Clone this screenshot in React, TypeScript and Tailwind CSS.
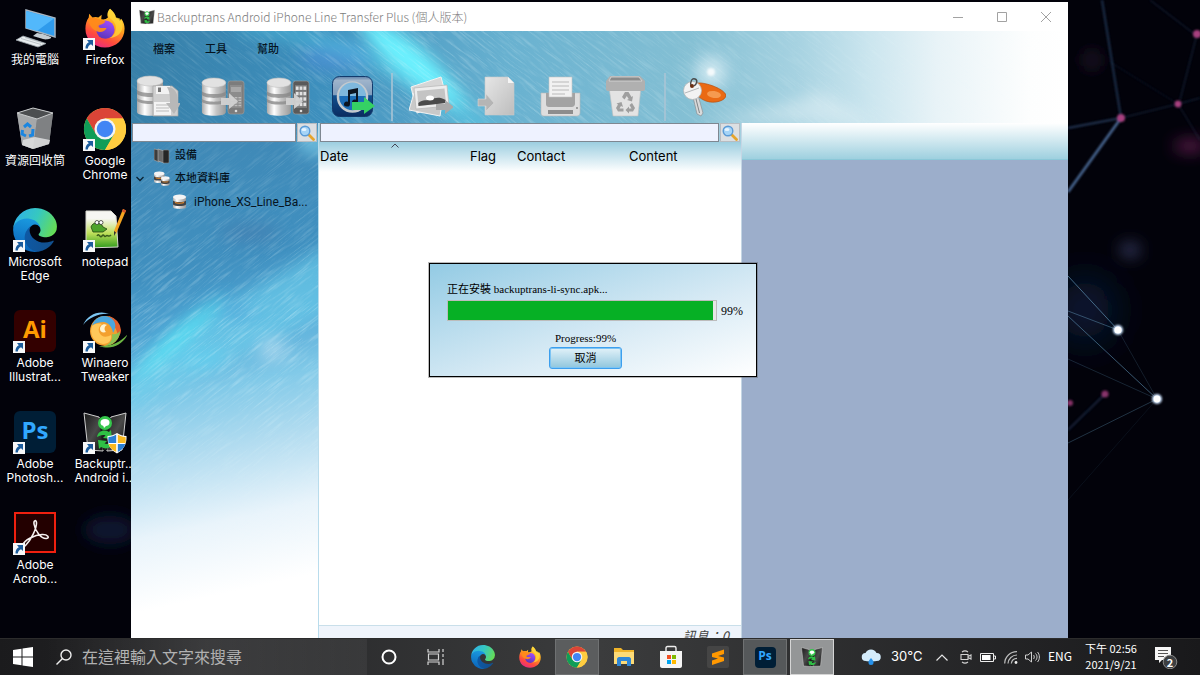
import type { ReactNode } from "react";

const SANS = "font-['Inter','Noto_Sans_CJK_TC',sans-serif]";
const CJK = "font-['Noto_Sans_CJK_TC',sans-serif]";

/* ---------- shared gradients and textures ---------- */

function SharedDefs() {
  return (
    <svg className="absolute h-0 w-0" aria-hidden="true">
      <defs>
        <linearGradient id="edge-dark" x1="0" y1="0" x2="1" y2="0.2">
          <stop offset="0" stopColor="#0d5aa8" />
          <stop offset="1" stopColor="#12508f" />
        </linearGradient>
        <linearGradient id="edge-blue" x1="0.6" y1="0" x2="0.4" y2="1">
          <stop offset="0" stopColor="#1b9de2" />
          <stop offset="1" stopColor="#0b63b8" />
        </linearGradient>
        <linearGradient id="edge-green" x1="0" y1="0.3" x2="1" y2="0.6">
          <stop offset="0" stopColor="#2fb1e8" />
          <stop offset="0.5" stopColor="#36c8c0" />
          <stop offset="1" stopColor="#66dd55" />
        </linearGradient>
        <linearGradient id="fox-body" x1="0.8" y1="0" x2="0.3" y2="1">
          <stop offset="0" stopColor="#ffe84a" />
          <stop offset="0.4" stopColor="#ffa41c" />
          <stop offset="0.75" stopColor="#ff4a3d" />
          <stop offset="1" stopColor="#e62a84" />
        </linearGradient>
        <linearGradient id="fox-globe" x1="0.7" y1="0" x2="0.3" y2="1">
          <stop offset="0" stopColor="#a04cff" />
          <stop offset="1" stopColor="#5a35b8" />
        </linearGradient>
        <linearGradient id="metal" x1="0" y1="0" x2="1" y2="0">
          <stop offset="0" stopColor="#a9a9a9" />
          <stop offset="0.3" stopColor="#ffffff" />
          <stop offset="0.6" stopColor="#c6c6c6" />
          <stop offset="1" stopColor="#9a9a9a" />
        </linearGradient>
        <linearGradient id="paper" x1="0" y1="0" x2="1" y2="1">
          <stop offset="0" stopColor="#e6e6e6" />
          <stop offset="1" stopColor="#bdbdbd" />
        </linearGradient>
        <linearGradient id="folded" x1="0" y1="0" x2="1" y2="1">
          <stop offset="0" stopColor="#191919" />
          <stop offset="0.5" stopColor="#4a4a4a" />
          <stop offset="1" stopColor="#0c0c0c" />
        </linearGradient>
        <filter id="soft8" x="-200%" y="-300%" width="500%" height="700%">
          <feGaussianBlur stdDeviation="8" />
        </filter>
        <filter id="soft20" x="-200%" y="-200%" width="500%" height="500%">
          <feGaussianBlur stdDeviation="20" />
        </filter>
        <filter id="soft1" x="-100%" y="-100%" width="300%" height="300%">
          <feGaussianBlur stdDeviation="1.2" />
        </filter>
        <filter id="streaks" x="0" y="0" width="100%" height="100%">
          <feTurbulence type="fractalNoise" baseFrequency="0.035 0.6" numOctaves="3" seed="4" />
          <feColorMatrix values="0 0 0 0 0.85  0 0 0 0 0.98  0 0 0 0 1  2.6 0 0 0 -1.2" />
        </filter>
      </defs>
    </svg>
  );
}

function Wallpaper() {
  return (
    <svg
      className="absolute inset-0 h-full w-full"
      viewBox="0 0 1200 675"
      preserveAspectRatio="xMaxYMin slice"
      aria-hidden="true"
    >
      <rect width="1200" height="675" fill="#02020a" />
      <ellipse cx="110" cy="530" rx="26" ry="14" fill="#0f1530" filter="url(#soft8)" />
      <ellipse cx="1130" cy="250" rx="10" ry="7" fill="#3a3f68" filter="url(#soft8)" />
      <ellipse cx="1092" cy="60" rx="8" ry="8" fill="#2a1c30" filter="url(#soft8)" />
      <ellipse cx="1190" cy="146" rx="16" ry="5" fill="#7a2460" filter="url(#soft8)" />
      <ellipse cx="1085" cy="310" rx="26" ry="30" fill="#0e2140" filter="url(#soft20)" />
      <g stroke="#2b4468" fill="none" filter="url(#soft1)">
        <path d="M1102 0 1121 118" strokeWidth="2" opacity=".7" />
        <path d="M1068 128 1121 118" strokeWidth="2" opacity=".8" />
        <path d="M1121 118 1068 192" strokeWidth="2.5" stroke="#4c6c98" />
        <path d="M1121 118 1178 104 1200 98" opacity=".6" />
        <path d="M1110 62 1178 104" opacity=".3" />
        <path d="M1197 34 1180 100" opacity=".6" />
        <path d="M1150 0 1197 36" opacity=".6" />
        <path d="M1178 104 1200 140" opacity=".5" />
        <path d="M1105 394 1068 430" strokeWidth="2" opacity=".5" />
      </g>
      <g stroke="#5d8fb0" fill="none">
        <path d="M1068 276 1118 330" opacity=".7" />
        <path d="M1068 311 1118 330" opacity=".5" />
        <path d="M1068 316 1157 399" opacity=".6" />
        <path d="M1068 359 1157 399" opacity=".25" />
        <path d="M1118 330 1157 399" opacity=".2" />
        <path d="M1157 399 1068 443" opacity=".35" />
        <path d="M1157 399 1068 500" opacity=".1" />
      </g>
      <g fill="#a8407f" filter="url(#soft1)">
        <circle cx="1121" cy="118" r="4" />
        <circle cx="1178" cy="104" r="3.4" />
        <circle cx="1197" cy="34" r="4" />
        <circle cx="1105" cy="394" r="3.6" opacity=".8" />
        <circle cx="1070" cy="403" r="3" opacity=".8" />
      </g>
      <g filter="url(#soft1)">
        <circle cx="1118" cy="330" r="5" fill="#cfe4ff" />
        <circle cx="1157" cy="399" r="5" fill="#cfe4ff" />
      </g>
      <circle cx="1118" cy="330" r="3.6" fill="#fff" />
      <circle cx="1157" cy="399" r="3.4" fill="#fff" />
    </svg>
  );
}

function HeaderArt() {
  return (
    <svg
      className="absolute inset-0 h-full w-full"
      viewBox="0 0 937 92"
      preserveAspectRatio="none"
      aria-hidden="true"
    >
      <defs>
        <linearGradient id="header-base" x1="0" y1="0" x2="1" y2="0">
          <stop offset="0" stopColor="#377fa8" />
          <stop offset="0.2" stopColor="#3d8fbd" />
          <stop offset="0.4" stopColor="#68b1d0" />
          <stop offset="0.6" stopColor="#85c0d4" />
          <stop offset="0.71" stopColor="#a6d2e1" />
          <stop offset="0.79" stopColor="#cce6ef" />
          <stop offset="0.86" stopColor="#e8f3f7" />
          <stop offset="0.96" stopColor="#fdfefe" />
          <stop offset="1" stopColor="#ffffff" />
        </linearGradient>
        <linearGradient id="header-mask-fill" x1="0" y1="0" x2="1" y2="0">
          <stop offset="0" stopColor="#444" />
          <stop offset="0.3" stopColor="#ccc" />
          <stop offset="0.8" stopColor="#555" />
          <stop offset="1" stopColor="#000" />
        </linearGradient>
        <mask id="header-mask">
          <rect width="937" height="92" fill="url(#header-mask-fill)" />
        </mask>
      </defs>
      <rect width="937" height="92" fill="url(#header-base)" />
      <ellipse cx="205" cy="26" rx="36" ry="14" fill="#4f90d6" opacity=".7" filter="url(#soft8)" />
      <path d="M120 -10C220 0 330 50 380 110L330 100C290 60 230 15 100 0Z" fill="#55cdea" opacity=".5" filter="url(#soft8)" />
      <path d="M225 -14C280 -4 312 36 338 78C290 66 245 30 225 -14Z" fill="#6cf2ff" filter="url(#soft8)" />
      <path d="M740 92H560C610 84 650 76 690 60Z" fill="#fff" opacity=".35" filter="url(#soft8)" />
      <circle cx="580" cy="41" r="16" fill="#e9f6fb" opacity=".7" filter="url(#soft8)" />
      <circle cx="580" cy="41" r="4" fill="#fff" opacity=".8" filter="url(#soft1)" />
      <g mask="url(#header-mask)">
        <g transform="rotate(38 300 40)">
          <rect x="-200" y="-420" width="1000" height="900" filter="url(#streaks)" opacity=".35" />
        </g>
      </g>
    </svg>
  );
}

function SidebarArt() {
  return (
    <svg
      className="absolute inset-0 h-full w-full"
      viewBox="0 0 188 515"
      preserveAspectRatio="none"
      aria-hidden="true"
    >
      <defs>
        <linearGradient id="side-base" x1="0.1" y1="0" x2="0.18" y2="1">
          <stop offset="0" stopColor="#3f87b4" />
          <stop offset="0.3" stopColor="#4090c0" />
          <stop offset="0.42" stopColor="#50a5d4" />
          <stop offset="0.54" stopColor="#80c9e8" />
          <stop offset="0.66" stopColor="#b2dcf0" />
          <stop offset="0.8" stopColor="#e9f4fb" />
          <stop offset="0.94" stopColor="#ffffff" />
        </linearGradient>
        <linearGradient id="side-mask-fill" x1="0" y1="0" x2="0" y2="1">
          <stop offset="0" stopColor="#444" />
          <stop offset="0.4" stopColor="#ddd" />
          <stop offset="0.7" stopColor="#555" />
          <stop offset="0.85" stopColor="#000" />
        </linearGradient>
        <mask id="side-mask">
          <rect width="188" height="515" fill="url(#side-mask-fill)" />
        </mask>
      </defs>
      <rect width="188" height="515" fill="url(#side-base)" />
      <ellipse cx="185" cy="20" rx="18" ry="12" fill="#79c9e6" opacity=".8" filter="url(#soft8)" />
      <ellipse cx="120" cy="110" rx="30" ry="8" fill="#4676a8" opacity=".5" filter="url(#soft8)" />
      <path d="M200 120C150 155 60 190 -10 270L-10 290C60 260 130 220 200 190Z" fill="#6fd2ee" opacity=".6" filter="url(#soft8)" />
      <path d="M100 172C60 186 20 226 -6 262C40 240 70 205 100 172Z" fill="#5ceaf9" opacity=".85" filter="url(#soft8)" />
      <ellipse cx="106" cy="188" rx="12" ry="6" fill="#4b9fd8" opacity=".7" filter="url(#soft8)" />
      <ellipse cx="70" cy="235" rx="24" ry="8" fill="#5cd2f2" opacity=".6" filter="url(#soft8)" />
      <ellipse cx="142" cy="226" rx="14" ry="12" fill="#c6e4f4" opacity=".6" filter="url(#soft8)" />
      <g mask="url(#side-mask)">
        <g transform="rotate(-38 94 200)">
          <rect x="-300" y="-200" width="800" height="800" filter="url(#streaks)" opacity=".35" />
        </g>
      </g>
    </svg>
  );
}

/* ---------- brand icons ---------- */

function EdgeIcon({ className }: { className: string }) {
  return (
    <svg className={className} viewBox="4 5 257 256" aria-hidden="true">
      <path fill="url(#edge-dark)" d="M235.68 195.46a93.73 93.73 0 0 1-10.54 4.71 101.87 101.87 0 0 1-35.9 6.46c-47.32 0-88.54-32.55-88.54-74.32A31.48 31.48 0 0 1 117.13 105c-42.8 1.8-53.8 46.4-53.8 72.53 0 73.88 68.09 81.37 82.76 81.37 7.91 0 19.84-2.3 27-4.56l1.31-.44a128.34 128.34 0 0 0 66.6-52.8 4 4 0 0 0-5.32-5.64Z" />
      <path fill="url(#edge-blue)" d="M110.34 246.34A79.2 79.2 0 0 1 87.6 225a80.72 80.72 0 0 1 29.53-120c3.12-1.47 8.45-4.13 15.54-4a32.35 32.35 0 0 1 25.69 13 31.88 31.88 0 0 1 6.36 18.66c0-.21 24.46-79.6-80-79.6-43.9 0-80 41.66-80 78.21a130.15 130.15 0 0 0 12.11 56 128 128 0 0 0 156.38 67.11 75.55 75.55 0 0 1-62.78-8Z" />
      <path fill="url(#edge-green)" d="M156.94 153.78c-.81 1.05-3.3 2.5-3.3 5.66 0 2.61 1.7 5.12 4.72 7.23 14.38 10 41.49 8.68 41.56 8.68a59.56 59.56 0 0 0 30.27-8.35 61.38 61.38 0 0 0 30.43-52.88c.26-22.41-8-37.31-11.34-43.91C228.11 28.9 182.33 5 132.62 5A128 128 0 0 0 4.63 131.21c.48-36.54 36.8-66.05 80-66.05 3.5 0 23.46.34 42 10.07 16.34 8.58 24.9 18.94 30.85 29.21 6.18 10.67 7.28 24.15 7.28 29.52s-2.74 13.33-7.82 19.82Z" />
    </svg>
  );
}

function ChromeIcon({ className }: { className: string }) {
  return (
    <svg className={className} viewBox="0 0 48 48" aria-hidden="true">
      <circle cx="24" cy="24" r="23" fill="#ffcd40" />
      <path fill="#db4437" d="M4.1 12.5A23 23 0 0 1 43.9 12.5H24L14 29.8Z" />
      <path fill="#0f9d58" d="M4.1 12.5A23 23 0 0 0 24 47L34 29.8 14.1 29.8Z" />
      <path fill="#ffcd40" d="M43.9 12.5A23 23 0 0 1 24 47L34 29.8 24 12.5Z" />
      <circle cx="24" cy="24" r="11.5" fill="#f4f4f4" />
      <circle cx="24" cy="24" r="9" fill="#4285f4" />
    </svg>
  );
}

function FirefoxIcon({ className }: { className: string }) {
  return (
    <svg className={className} viewBox="0 0 48 48" aria-hidden="true">
      <path
        fill="url(#fox-body)"
        d="M30 1c4 3.500 6.500 7 7 10.500 2.500 1 4 2.500 5 4.500l1.500-3C46.500 17 47.500 21 47.500 25 47.500 38 37 47.500 24 47.500S.5 38 .5 25C.5 19.500 2 15 4.500 11.500l.5-4.500 4 4.500c2.500-.8 5-.8 7 0L20 8l-.5 5.500c3 .5 6 0 8-2C26 8 27 4 30 1Z"
      />
      <circle cx="24.500" cy="26" r="11" fill="url(#fox-globe)" />
      <path fill="#ff8a1a" d="M4 13c4-2 9-2 13 .5l7.500 2.500c-1 3-4.500 3.500-7 4.500-2 .8-1.500 3 1 3.500 3 .5 5-.5 7.500 0-2 4-6.500 5.500-10 4.500C9 27 5 21 4 13Z" opacity=".95" />
      <path fill="#ffd83a" d="M30 1c-4 5-2.500 9.500 2.500 13.500 4.500 4 5.500 9 3.500 14.500-1 3-4 6-7 7 9 0 15.500-6 16-13.500.2-4-1-7-3-9.500-1-.8-3-1-5-1.500C36.500 7.500 34 4 30 1Z" opacity=".75" />
    </svg>
  );
}

function FoldedPhonesIcon({ className, shield = false }: { className: string; shield?: boolean }) {
  return (
    <svg className={className} viewBox="0 0 44 44" aria-hidden="true">
      <path d="M1 3 16 7 22 22 20 41 5 40Z" fill="url(#folded)" stroke="#cfcfcf" strokeWidth="1" />
      <path d="M43 3 28 7 22 22 24 41 39 40Z" fill="url(#folded)" stroke="#cfcfcf" strokeWidth="1" />
      <path d="M16 8H28L24 40H20Z" fill="#1c1c1c" />
      <circle cx="22" cy="13" r="7" fill="#35c64b" />
      <ellipse cx="22" cy="12.500" rx="4.500" ry="3.500" fill="#fff" />
      <path d="M20 15 21 18 24 15Z" fill="#fff" />
      <path d="M14 27c1-6 7-8 12-5l2-2 1 9-9-1 2.500-2.500c-3-1-5 0-8.500 1.500ZM30 32c-1 6-7 8-12 5l-2 2-1-9 9 1-2.500 2.500c3 1 5 0 8.500-1.500Z" fill="#2fbf45" />
      {shield && (
        <g>
          <path d="M34 23c3 2 6 3 9.500 3 .5 8-3 14-9.500 17.500C27.500 40 24 34 24.500 26c3.500 0 6.500-1 9.500-3Z" fill="#fff" />
          <path d="M33.200 24.500V33H25.500a19 19 0 0 1 0-6c3 0 5.500-1 7.700-2.500Z" fill="#2a7fd4" />
          <path d="M34.800 24.500V33h7.700a19 19 0 0 0 0-6c-3 0-5.500-1-7.700-2.500Z" fill="#f9b81e" />
          <path d="M33.200 42V34H25.700c1 3.600 3.600 6.400 7.500 8Z" fill="#f9b81e" />
          <path d="M34.800 42V34h7.500c-1 3.600-3.600 6.400-7.500 8Z" fill="#2a7fd4" />
        </g>
      )}
    </svg>
  );
}

/* ---------- desktop shortcuts ---------- */

function ComputerIcon() {
  return (
    <svg className="h-11 w-11" viewBox="0 0 44 44" aria-hidden="true">
      <path d="M13 4 42 12v19L13 22Z" fill="#2f9bec" stroke="#a6b4c0" strokeWidth="1.500" />
      <path d="M13 5 41 12.500 24 25 13 22Z" fill="#52b8fb" />
      <path d="M24 27 30 28 38 31c1 2-5 3-8 2l-10-3Z" fill="#c4ccd2" />
      <path d="M10 30 33 37.500 25 41 3 34Z" fill="#e8ecee" stroke="#9aa3aa" strokeWidth=".8" />
      <path d="M8 32.500 28 38.500M12 31.500 30 37" stroke="#a9b1b7" strokeWidth=".7" />
    </svg>
  );
}

function RecycleBinIcon() {
  return (
    <svg className="h-11 w-11" viewBox="0 0 44 44" aria-hidden="true">
      <path d="M4 6 20 1 40 6 36 37 20 42 9 38Z" fill="#8b8d8f" />
      <path d="M4 6 24 12 20 42 9 38Z" fill="#a6a8aa" />
      <path d="M24 12 40 6 36 37 20 42Z" fill="#7f8183" />
      <path d="M4 6 20 1 40 6 24 12Z" fill="#4c4e50" stroke="#c9cbcc" strokeWidth="1" />
      <path d="M10 33 22 30 37 33 36 37 20 42 9 38Z" fill="#dfe1e2" opacity=".85" />
      <g fill="none" stroke="#1b86e0" strokeWidth="3">
        <path d="M11 20 14.500 17 18 20" />
        <path d="M20 22 19.500 28 16 29" />
        <path d="M13 29 9 27 9.500 23" />
      </g>
    </svg>
  );
}

function NotepadIcon() {
  return (
    <svg className="h-11 w-11" viewBox="0 0 44 44" aria-hidden="true">
      <defs>
        <linearGradient id="note-bg" x1="0" y1="0" x2="0" y2="1">
          <stop offset="0.2" stopColor="#f6f6f2" />
          <stop offset="0.6" stopColor="#bfe05a" />
          <stop offset="1" stopColor="#2f9a1d" />
        </linearGradient>
      </defs>
      <path d="M3 3H28L33 8 35 39 3 40Z" fill="url(#note-bg)" stroke="#d8d8d0" />
      <path d="M8 19C9 14 18 13 20 19L24 21 20 24H10Z" fill="#4da32a" stroke="#23480f" strokeWidth=".8" />
      <circle cx="14" cy="14.500" r="2" fill="#fff" stroke="#222" strokeWidth=".7" />
      <circle cx="18" cy="14.500" r="2" fill="#fff" stroke="#222" strokeWidth=".7" />
      <path d="M14 28c2-4 3 3 5 0s2 2 4 0 2 2 5-1" stroke="#3a5b1c" strokeWidth="1.500" fill="none" />
      <path d="M33 26 31 23 40 1 43 2.500Z" fill="#f4a420" />
      <path d="M40 1 43 2.500 42 5 39 3.500Z" fill="#d8542c" />
      <path d="M31 23 33 24.500 31 28Z" fill="#333" />
    </svg>
  );
}

function WinaeroIcon() {
  return (
    <svg className="h-11 w-11" viewBox="0 0 44 44" aria-hidden="true">
      <circle cx="22" cy="22" r="15" fill="#f3a02f" />
      <path d="M26 7a16 16 0 0 1 12 14c0 3-1 5-3 7-1-9-5-14-12-17Z" fill="#e2602c" />
      <path d="M37 22c0 8-7 15-16 15 6-2 9-6 8-12 4 1 6-1 8-3Z" fill="#8cc152" />
      <path d="M9 17c2-7 9-12 17-9 7 3 8 10 4 16-1-6-4-10-9-11-5 0-9 1-12 4Z" fill="#4aa6df" />
      <path d="M9 17c-3 8 2 17 11 18 6 0 9-4 8-9-5 3-10 2-12-3-1-3 0-6 3-8-4-1-8 0-10 2Z" fill="#ffc85a" />
      <path d="M17 20c0-3 3-6 7-4-3 1-3 5-1 7-3 1-6 0-6-3Z" fill="#fff3cf" />
      <path d="M0 16C5 5 16 1 27 5 16 4 7 8 0 16Z" fill="#7cc6f2" />
      <path d="M45 25C39 37 28 41 16 37c11 1 21-3 29-12Z" fill="#6cb543" />
    </svg>
  );
}

function AcrobatIcon() {
  return (
    <svg className="h-11 w-11" viewBox="0 0 44 44" aria-hidden="true">
      <rect x="2" y="2" width="40" height="39" fill="#230000" stroke="#f0200f" strokeWidth="2" />
      <path
        d="M10 34c1-5 12-10 19-10.500 6-.3 8 3.500 4.500 4C28 28 22 20 21 13c-.5-4 2.500-4.500 2.500-1C23.500 18 18 29 12.500 34.500 11 36 9.500 36 10 34Z"
        fill="none"
        stroke="#f5f0f0"
        strokeWidth="1.600"
      />
    </svg>
  );
}

function AdobeTile({ text, className }: { text: string; className: string }) {
  return (
    <span
      className={`flex h-[42px] w-[42px] items-center justify-center rounded-md pb-1 font-['Open_Sans',sans-serif] text-[24px] leading-none font-bold ${className}`}
      aria-hidden="true"
    >
      {text}
    </span>
  );
}

function ShortcutArrow() {
  return (
    <svg className="absolute bottom-0 left-0 h-3 w-3" viewBox="0 0 12 12" aria-hidden="true">
      <rect width="12" height="12" fill="#f7f8f9" />
      <path d="M4 2H10V8L8 6.200C6 7 5 8.500 4.800 10.500H2.500C2.300 7.500 3.500 5.500 5.800 4.200Z" fill="#1c5c9c" />
    </svg>
  );
}

type Shortcut = { lines: string[]; icon: ReactNode; linked: boolean };

const shortcuts: Shortcut[] = [
  { lines: ["我的電腦"], icon: <ComputerIcon />, linked: false },
  { lines: ["Firefox"], icon: <FirefoxIcon className="h-10 w-10" />, linked: true },
  { lines: ["資源回收筒"], icon: <RecycleBinIcon />, linked: false },
  { lines: ["Google", "Chrome"], icon: <ChromeIcon className="h-11 w-11" />, linked: true },
  { lines: ["Microsoft", "Edge"], icon: <EdgeIcon className="h-11 w-11" />, linked: true },
  { lines: ["notepad"], icon: <NotepadIcon />, linked: true },
  { lines: ["Adobe", "Illustrat..."], icon: <AdobeTile text="Ai" className="bg-[#330000] text-[#ff9a00]" />, linked: true },
  { lines: ["Winaero", "Tweaker"], icon: <WinaeroIcon />, linked: true },
  { lines: ["Adobe", "Photosh..."], icon: <AdobeTile text="Ps" className="bg-[#001e36] text-[#31a8ff]" />, linked: true },
  { lines: ["Backuptr...", "Android i..."], icon: <FoldedPhonesIcon className="h-11 w-11" shield />, linked: true },
  { lines: ["Adobe", "Acrob..."], icon: <AcrobatIcon />, linked: true },
];

function DesktopShortcuts() {
  return (
    <nav className="relative w-[131px] shrink-0 overflow-hidden pt-[6px]" aria-label="Desktop">
      <ul className="grid auto-rows-[101px] grid-cols-[70px_70px]">
        {shortcuts.map((s) => (
          <li key={s.lines.join(" ")}>
            <button type="button" className="flex w-full flex-col items-center text-center text-xs leading-[14px] text-white">
              <span className="relative mb-[3px] flex h-11 w-11 items-center justify-center">
                {s.icon}
                {s.linked && <ShortcutArrow />}
              </span>
              {s.lines.map((l) => (
                <span key={l} className="whitespace-nowrap">
                  {l}
                </span>
              ))}
            </button>
          </li>
        ))}
      </ul>
    </nav>
  );
}

/* ---------- toolbar icons ---------- */

function DatabaseShape() {
  return (
    <g>
      <path d="M1 6v31c0 5 26 5 26 0V6Z" fill="url(#metal)" />
      <ellipse cx="14" cy="6" rx="13" ry="5" fill="#e2e2e2" stroke="#bdbdbd" strokeWidth=".6" />
      <path d="M1 15c4 4 22 4 26 0v4c-4 4-22 4-26 0Z" fill="#858585" opacity=".75" />
      <path d="M1 23c4 4 22 4 26 0v3c-4 4-22 4-26 0Z" fill="#8f8f8f" opacity=".85" />
    </g>
  );
}

function BackupIcon() {
  return (
    <svg className="h-11 w-11" viewBox="0 0 44 44" aria-hidden="true">
      <DatabaseShape />
      <path d="M17 11H36L42 16V41H17Z" fill="#cfcfcf" stroke="#a8a8a8" strokeWidth=".7" />
      <rect x="20" y="11" width="14" height="8" fill="#f2f2f2" />
      <rect x="22" y="12.500" width="3" height="4.500" fill="#777" />
      <rect x="18" y="27" width="17" height="13" fill="#f4f4f4" />
      <path d="M20 30H33M20 33H33M20 36H33" stroke="#bbb" />
      <path d="M31 12C39 12 42 18 42 28H45L38 39 30 28H34C34 22 34 17 31 12Z" fill="#b8b8b8" />
    </svg>
  );
}

const phoneKeys = [0, 1, 2, 3].flatMap((r) => [0, 1, 2].map((c) => [c, r]));

function TransferIcon({ apple = false }: { apple?: boolean }) {
  return (
    <svg className="h-11 w-11" viewBox="0 0 44 44" aria-hidden="true">
      <g transform="translate(0 2) scale(.92 .95)">
        <DatabaseShape />
      </g>
      <rect x="27" y="6" width="16" height="33" rx="2.500" fill={apple ? "#5a5a5a" : "#7c7c7c"} stroke="#9b9b9b" strokeWidth=".7" />
      <rect x="29" y="10" width="12" height="23" fill={apple ? "#7a7a7a" : "#8c8c8c"} />
      {phoneKeys.map(([c, r]) => (
        <rect
          key={`${c}-${r}`}
          x={29.8 + c * 3.8}
          y={(apple ? 11.5 : 22) + r * (apple ? 5.4 : 2.6)}
          width="2.800"
          height={apple ? 3.4 : 1.4}
          fill={apple ? "#e2e2e2" : "#bdbdbd"}
        />
      ))}
      {!apple && <rect x="30" y="12" width="10" height="5" fill="#a8a8a8" />}
      <circle cx="35" cy="36" r="1.300" fill="#ddd" />
      <path d="M20 23H28V18L37 26.500 28 34V30H20Z" fill="#d2d2d2" opacity=".95" />
    </svg>
  );
}

function ITunesIcon() {
  return (
    <svg className="h-11 w-11" viewBox="0 0 44 44" aria-hidden="true">
      <defs>
        <linearGradient id="itunes" x1="0" y1="0" x2="0" y2="1">
          <stop offset="0" stopColor="#5d7fa8" />
          <stop offset="0.1" stopColor="#9fb4cb" />
          <stop offset="0.46" stopColor="#7f9dbd" />
          <stop offset="0.48" stopColor="#11508f" />
          <stop offset="1" stopColor="#0b2c60" />
        </linearGradient>
      </defs>
      <rect x="1.500" y="1.500" width="40" height="40" rx="7" fill="url(#itunes)" stroke="#123a6c" />
      <circle cx="21.500" cy="22" r="14.500" fill="#1b6cb6" stroke="#c3c9ce" strokeWidth="2.500" />
      <path d="M8 21a13.500 13.500 0 0 1 27 0Z" fill="#7fb8dd" />
      <path d="M17 15 27 13V27a3 2.500 0 1 1-2-2.300V18L19 19.200V29a3 2.500 0 1 1-2-2.300Z" fill="#0c1420" />
      <path d="M21 27H33V22L44 31 33 39V35H21Z" fill="#35d164" />
    </svg>
  );
}

function PhotosIcon() {
  return (
    <svg className="h-11 w-11" viewBox="0 0 44 44" aria-hidden="true">
      <path d="M2 12 32 2 39 28 8 38Z" fill="#d6d6d6" stroke="#f2f2f2" />
      <path d="M5 18 34 22 31 41 0 35Z" fill="#c9c9c9" stroke="#f2f2f2" />
      <path d="M5 13 38 10 40 31 7 34Z" fill="#ededed" stroke="#b5b5b5" strokeWidth=".7" />
      <path d="M8 16 35.500 13.500 37 28 9.500 31Z" fill="#c4c4c4" />
      <path d="M9.300 28C14 24 18 26 22 24.500S30 21.500 36.700 25L37 28 9.500 31Z" fill="#4a4a4a" />
      <ellipse cx="21" cy="23" rx="4" ry="2.500" fill="#fff" />
      <path d="M27 29H36V25L45 32 36 39V35H27Z" fill="#a9a9a9" />
    </svg>
  );
}

function ExportPageIcon() {
  return (
    <svg className="h-11 w-11" viewBox="0 0 44 44" aria-hidden="true">
      <path d="M11 2H34L40 8V40H11Z" fill="url(#paper)" stroke="#c9c9c9" strokeWidth=".6" />
      <path d="M34 2V8H40Z" fill="#f6f6f6" />
      <path d="M4 24H12V19L20 28 12 36V31H4Z" fill="#b5b5b5" stroke="#d8d8d8" strokeWidth=".6" />
    </svg>
  );
}

function PrinterIcon() {
  return (
    <svg className="h-11 w-11" viewBox="0 0 44 44" aria-hidden="true">
      <path d="M2 18H41V38c0 2-2 3-3 3H5c-2 0-3-1-3-3Z" fill="#dedede" stroke="#b9b9b9" strokeWidth=".6" />
      <path d="M7 18H36V29c0 2-2 3-3 3H10c-2 0-3-1-3-3Z" fill="#a3a3a3" />
      <path d="M10 2H33V22H10Z" fill="#f1f1f1" stroke="#c2c2c2" strokeWidth=".6" />
      <path d="M13 7H30M13 11H30M13 15H30M13 19H26" stroke="#b9b9b9" />
      <rect x="9" y="35" width="25" height="4" fill="#8d8d8d" />
      <circle cx="38" cy="33" r="1" fill="#888" />
    </svg>
  );
}

function TrashIcon() {
  return (
    <svg className="h-11 w-11" viewBox="0 0 44 44" aria-hidden="true">
      <path d="M5 12H37L34 41H9Z" fill="#e3e3e3" stroke="#bfbfbf" strokeWidth=".6" />
      <path d="M6 1H36L41 6V14c0 1-1 2-2 2H4c-1 0-2-1-2-2V6Z" fill="#b0b0b0" />
      <path d="M7 2H35L38 6H5Z" fill="#8b8b8b" stroke="#d9d9d9" strokeWidth=".8" />
      <g fill="#9f9f9f">
        <path d="M18 22 21 17H24.500L27.500 22 29 21 28 26.500 23 25 24.700 24 22.800 21 20.500 24.500Z" />
        <path d="M28 28 31 33 29 36.500H25V38.500L21.500 35 25 31.500V33.500H27.500L25.500 30Z" />
        <path d="M19.500 33.500V36.500H14L12 33 14 29.500 12.500 28.500 17.500 27 19 32 17 31 15.500 33.500Z" />
      </g>
    </svg>
  );
}

function KeyIcon() {
  return (
    <svg className="h-11 w-11" viewBox="0 0 44 44" aria-hidden="true">
      <path d="M15 8C24 7 42 14 44 20 44 26 32 29 24 26 19 24 17 22 15 20Z" fill="#ea6a14" stroke="#b94e0c" strokeWidth=".7" />
      <ellipse cx="32" cy="19.500" rx="7" ry="3.500" fill="#f59a50" transform="rotate(8 32 19.500)" />
      <path d="M11 22 15 39 19 41 21 38 16 20Z" fill="#d8dadb" stroke="#8b8f92" strokeWidth=".7" />
      <path d="M13.500 22 17.500 38" stroke="#808487" />
      <circle cx="10.500" cy="15.500" r="9" fill="#f3f3f3" stroke="#b4b7b9" strokeWidth=".8" />
      <path d="M3 18 17 13" stroke="#b5b8ba" />
      <path d="M9 11C8 6 10 3 13 4S15 9 12 11" fill="none" stroke="#4a4a4a" strokeWidth="1.400" />
      <circle cx="10" cy="11" r="2" fill="#6b2f12" />
    </svg>
  );
}

function ToolButton({ label, children }: { label: string; children: ReactNode }) {
  return (
    <button type="button" aria-label={label} className="h-11 w-11">
      {children}
    </button>
  );
}

function ToolDivider() {
  return <span className="mx-4 h-12 w-[2px] bg-[#a9c4d4]/80" />;
}

function LoupeIcon() {
  return (
    <svg className="h-4 w-4" viewBox="0 0 16 16" aria-hidden="true">
      <path d="M9.500 9.500 14.500 14.500" stroke="#e6a52c" strokeWidth="2.800" strokeLinecap="round" />
      <circle cx="6" cy="6" r="4.800" fill="#a5d4f7" stroke="#5b9bd6" strokeWidth="1.400" />
      <ellipse cx="5" cy="4.500" rx="2.500" ry="1.600" fill="#e6f4ff" />
    </svg>
  );
}

function SearchField({ label }: { label: string }) {
  return (
    <form className="flex h-[19px] gap-px px-px" onSubmit={(e) => e.preventDefault()}>
      <input
        type="search"
        aria-label={label}
        className="min-w-0 flex-1 appearance-none border border-[#7e8791] bg-[#eef2ff] px-1 text-xs outline-none"
      />
      <button type="submit" aria-label={label} className="flex w-5 items-center justify-center border border-[#b7bcc1] bg-[#dcdfe2]">
        <LoupeIcon />
      </button>
    </form>
  );
}

/* ---------- sidebar tree icons ---------- */

function DevicesIcon() {
  return (
    <svg className="h-4 w-4" viewBox="0 0 16 16" aria-hidden="true">
      <path d="M0 1 5 2V14L0 12Z" fill="#3c3c3c" stroke="#aaa" strokeWidth=".6" />
      <path d="M4 1 10 3V15L4 13Z" fill="#6a6a6a" stroke="#bbb" strokeWidth=".6" />
      <rect x="9" y="2" width="6" height="13" rx="1" fill="#262626" stroke="#8b8b8b" strokeWidth=".6" />
    </svg>
  );
}

function DiskStack({ x = 0, y = 0, s = 1 }: { x?: number; y?: number; s?: number }) {
  return (
    <g transform={`translate(${x} ${y}) scale(${s})`}>
      <path d="M0 3v10c0 2.500 13 2.500 13 0V3Z" fill="url(#metal)" />
      <ellipse cx="6.500" cy="3" rx="6.500" ry="2.500" fill="#f4f4f4" />
      <path d="M0 6.500c2 2 11 2 13 0v4c-2 2-11 2-13 0Z" fill="#3f4347" />
      <path d="M2 8.500c2 1 7 1 9 0" stroke="#f08a24" strokeWidth="1.200" fill="none" />
    </g>
  );
}

/* ---------- application window ---------- */

function TitleBar() {
  return (
    <header className="flex h-[29px] items-center bg-white pl-2">
      <FoldedPhonesIcon className="h-4 w-4" />
      <h1 className={`ml-[2px] flex-1 truncate text-xs font-light text-[#7c7c7c] ${CJK}`}>
        Backuptrans Android iPhone Line Transfer Plus (個人版本)
      </h1>
      <div className="flex text-[#a2a2a2]">
        <button type="button" aria-label="Minimize" className="flex h-7 w-11 items-center justify-center">
          <svg className="h-[10px] w-[10px]" viewBox="0 0 10 10"><path d="M0 5.5H10" stroke="currentColor" /></svg>
        </button>
        <button type="button" aria-label="Maximize" className="flex h-7 w-11 items-center justify-center">
          <svg className="h-[10px] w-[10px]" viewBox="0 0 10 10"><path d="M.5.5H9.500V9.500H.5Z" fill="none" stroke="currentColor" /></svg>
        </button>
        <button type="button" aria-label="Close" className="flex h-7 w-11 items-center justify-center">
          <svg className="h-[10px] w-[10px]" viewBox="0 0 10 10"><path d="M0 0 10 10M10 0 0 10" stroke="currentColor" /></svg>
        </button>
      </div>
    </header>
  );
}

function MenuAndTools() {
  return (
    <div className="relative h-[92px] overflow-hidden">
      <HeaderArt />
      <div className="relative">
        <nav className="flex h-9 items-center gap-[30px] pl-[22px] text-[11px] font-medium text-[#06141f]">
          <button type="button">檔案</button>
          <button type="button">工具</button>
          <button type="button">幫助</button>
        </nav>
        <div className="flex items-center pt-[6px] pl-[5px]">
          <div className="flex gap-[21px]">
            <ToolButton label="Backup"><BackupIcon /></ToolButton>
            <ToolButton label="Transfer to Android"><TransferIcon /></ToolButton>
            <ToolButton label="Transfer to iPhone"><TransferIcon apple /></ToolButton>
            <ToolButton label="Import from iTunes"><ITunesIcon /></ToolButton>
          </div>
          <ToolDivider />
          <div className="flex gap-[21px]">
            <ToolButton label="Photos"><PhotosIcon /></ToolButton>
            <ToolButton label="Export"><ExportPageIcon /></ToolButton>
            <ToolButton label="Print"><PrinterIcon /></ToolButton>
            <ToolButton label="Delete"><TrashIcon /></ToolButton>
          </div>
          <ToolDivider />
          <ToolButton label="Register"><KeyIcon /></ToolButton>
        </div>
      </div>
    </div>
  );
}

function Sidebar() {
  return (
    <aside className="relative w-[188px] shrink-0 overflow-hidden border-r border-[#b9dcec]">
      <SidebarArt />
      <div className="relative">
        <SearchField label="Search devices" />
        <ul className="pt-[2px] text-[11px] font-medium text-[#06141f]">
          <li className="flex h-[23px] items-center gap-[5px] pl-[23px]">
            <DevicesIcon />
            設備
          </li>
          <li>
            <div className="flex h-[23px] items-center gap-[5px] pl-[5px]">
              <svg className="mr-[5px] h-2 w-2" viewBox="0 0 8 8" aria-hidden="true">
                <path d="M.5 2 4 5.500 7.500 2" fill="none" stroke="#0b2233" strokeWidth="1.300" />
              </svg>
              <svg className="h-4 w-4" viewBox="0 0 16 16" aria-hidden="true">
                <DiskStack s={0.8} />
                <DiskStack x={7} y={5} s={0.66} />
              </svg>
              本地資料庫
            </div>
            <ul>
              <li className="flex h-6 items-center gap-[6px] pl-[41px] font-['Roboto',sans-serif] text-xs font-normal">
                <svg className="h-4 w-4" viewBox="0 0 16 16" aria-hidden="true">
                  <DiskStack x={1} />
                </svg>
                iPhone_XS_Line_Ba...
              </li>
            </ul>
          </li>
        </ul>
      </div>
    </aside>
  );
}

function MessageList() {
  return (
    <section className="flex w-[422px] shrink-0 flex-col bg-white">
      <div className="bg-[#a3cfdf]">
        <SearchField label="Search messages" />
      </div>
      <table className="w-full table-fixed text-left text-[13px] text-black">
        <thead className="bg-linear-to-b from-[#9ccee0] to-white">
          <tr className="h-[30px]">
            <th className="relative w-[150px] p-0 pl-px font-normal" scope="col">
              Date
              <svg className="absolute top-[1px] left-[72px] h-[5px] w-2" viewBox="0 0 8 5" aria-hidden="true">
                <path d="M.5 4.500 4 1 7.500 4.500" fill="none" stroke="#445" />
              </svg>
            </th>
            <th className="w-[47px] p-0 pl-px font-normal" scope="col">Flag</th>
            <th className="w-[112px] p-0 pl-px font-normal" scope="col">Contact</th>
            <th className="p-0 pl-px font-normal" scope="col">Content</th>
          </tr>
        </thead>
        <tbody />
      </table>
      <footer className={`mt-auto h-[13px] overflow-hidden border-t border-[#c9dfea] bg-[#eff4fb] pt-[2px] pr-3 text-right text-[13px] leading-4 text-[#444] italic ${CJK}`}>
        訊息：0
      </footer>
    </section>
  );
}

function DetailPane() {
  return (
    <section className="flex min-w-0 flex-1 flex-col border-l border-[#c4d6e4] bg-[#9caecb]">
      <div className="h-[37px] border-b border-[#8cc8d8] bg-linear-to-b from-white to-[#9ed0df]" />
    </section>
  );
}

function InstallDialog() {
  return (
    <div
      role="dialog"
      aria-label="Installing"
      className="absolute top-[261px] left-[298px] w-[328px] border border-black bg-linear-to-br from-[#93cbe4] via-[#d9ebf5] via-60% to-white pt-[18px] pr-[12px] pb-[7px] pl-[17px] font-['Liberation_Serif','Noto_Sans_CJK_TC',serif] text-[11px] text-black outline outline-[#555]/40"
    >
      <p id="install-label" className="h-[18px] leading-[14px]">
        正在安裝 backuptrans-li-sync.apk...
      </p>
      <div className="flex items-center gap-1">
        <div
          role="progressbar"
          aria-labelledby="install-label"
          aria-valuenow={99}
          className="h-[21px] w-[270px] shrink-0 border border-[#bcbcbc] bg-[#e6e6e6]"
        >
          <div className="h-full bg-[#06b025]" style={{ width: "99%" }} />
        </div>
        <span className="text-xs">99%</span>
      </div>
      <div className="flex flex-col items-center pt-[9px] pr-[20px]">
        <p className="leading-4">Progress:99%</p>
        <button
          type="button"
          className="mt-px h-[22px] w-[73px] rounded-[3px] border border-[#3c9fee] bg-linear-to-b from-[#e2f2f9] to-[#8fc6dd] inset-ring inset-ring-[#7cc4f4]"
        >
          取消
        </button>
      </div>
    </div>
  );
}

/* ---------- taskbar ---------- */

function TaskButton({ label, className = "", children }: { label: string; className?: string; children: ReactNode }) {
  return (
    <button type="button" aria-label={label} className={`flex h-full w-11 items-center justify-center ${className}`}>
      {children}
    </button>
  );
}

function Taskbar() {
  return (
    <footer className="relative flex h-[37px] shrink-0 items-center border-t border-[#2c2c2c] bg-linear-to-r from-[#1b1b1d] via-[#3b3c3d] to-[#19191b] text-white">
      <button type="button" aria-label="Start" className="flex h-full w-[45px] items-center justify-center">
        <svg className="h-5 w-5" viewBox="0 0 20 20" aria-hidden="true">
          <path d="M0 3 8.500 1.800V9.500H0ZM9.500 1.600 20 0V9.500H9.500ZM0 10.500H8.500V18.200L0 17ZM9.500 10.500H20V20L9.500 18.400Z" fill="#fff" />
        </svg>
      </button>
      <div className="flex h-full w-[322px] items-center gap-[10px] bg-linear-to-r from-transparent via-white/10 to-white/5 pl-[11px]">
        <svg className="h-4 w-4 shrink-0" viewBox="0 0 16 16" aria-hidden="true">
          <circle cx="10" cy="6" r="5" fill="none" stroke="#eee" strokeWidth="1.400" />
          <path d="M6.500 9.500.5 15.500" stroke="#eee" strokeWidth="1.400" />
        </svg>
        <input
          type="text"
          aria-label="搜尋"
          placeholder="在這裡輸入文字來搜尋"
          className={`min-w-0 flex-1 bg-transparent pb-[3px] text-base outline-none placeholder:text-[#b1b1b1] ${CJK}`}
        />
      </div>
      <div className="flex h-full gap-[3px]">
        <TaskButton label="Cortana">
          <svg className="h-4 w-4" viewBox="0 0 16 16"><circle cx="8" cy="8" r="6.500" fill="none" stroke="#fff" strokeWidth="2" /></svg>
        </TaskButton>
        <TaskButton label="Task view">
          <svg className="h-4 w-[18px]" viewBox="0 0 18 16">
            <path d="M1 0V3H12V0M1 16V13H12V16M1.500 5H11.500V11H1.500ZM16 0V3M16 5V8M16 10V16" fill="none" stroke="#d5d5d5" strokeWidth="1.200" />
          </svg>
        </TaskButton>
        <TaskButton label="Edge"><EdgeIcon className="h-6 w-6" /></TaskButton>
        <TaskButton label="Firefox"><FirefoxIcon className="h-[22px] w-[22px]" /></TaskButton>
        <TaskButton label="Chrome" className="border border-[#6f7172] bg-[#5b5d5e]">
          <ChromeIcon className="h-[22px] w-[22px]" />
        </TaskButton>
        <TaskButton label="File Explorer">
          <svg className="h-[18px] w-[22px]" viewBox="0 0 22 18">
            <path d="M1 0H8L10 2H21V16H1Z" fill="#f0b429" />
            <path d="M1 4H21V16H1Z" fill="#fddb77" />
            <path d="M4 18V11c0-1 1-2 2-2H16c1 0 2 1 2 2V18H14V13H8V18Z" fill="#2f86d6" />
          </svg>
        </TaskButton>
        <TaskButton label="Microsoft Store">
          <svg className="h-6 w-[22px]" viewBox="0 0 22 24">
            <path d="M6 7V3c0-1 .5-1.500 1.500-1.500h7c1 0 1.500.5 1.500 1.500V7" fill="none" stroke="#eee" strokeWidth="1.400" />
            <path d="M0 6H22V21c0 1-1 2-2 2H2c-1 0-2-1-2-2Z" fill="#f5f5f5" />
            <rect x="7" y="10" width="4" height="4" fill="#f25022" />
            <rect x="12" y="10" width="4" height="4" fill="#7fba00" />
            <rect x="7" y="15" width="4" height="4" fill="#00a4ef" />
            <rect x="12" y="15" width="4" height="4" fill="#ffb900" />
          </svg>
        </TaskButton>
        <TaskButton label="Sublime Text">
          <svg className="h-[22px] w-[22px]" viewBox="0 0 22 22">
            <rect width="22" height="22" rx="2" fill="#454545" />
            <path d="M5 7.500 17 3.500V8L11 10 17 11.500V15L5 19V14.500L11 12.500 5 11Z" fill="#ff9800" />
          </svg>
        </TaskButton>
        <TaskButton label="Photoshop" className="border border-[#6f7172] bg-[#55585a]">
          <span className="flex h-[21px] w-[21px] items-center justify-center rounded-sm bg-[#001e36] pb-[2px] font-['Open_Sans',sans-serif] text-xs leading-none font-bold text-[#31a8ff]">
            Ps
          </span>
        </TaskButton>
        <TaskButton label="Backuptrans" className="border border-[#d5d5d5] bg-[#949697]">
          <FoldedPhonesIcon className="h-[22px] w-[22px]" />
        </TaskButton>
      </div>
      <div className={`ml-auto flex h-full items-center pr-[22px] ${CJK}`}>
        <svg className="h-[18px] w-5" viewBox="0 0 20 18" aria-hidden="true">
          <path d="M5 13a4 4 0 0 1-.5-8A6 6 0 0 1 15.500 5 4 4 0 0 1 16 13Z" fill="#d4ecfb" />
          <path d="M2 12c4 2 12 2 16 0-1 1-2 1-3 1H5Z" fill="#8cc6f0" />
          <path d="M10 10c2 2.500 2.500 3.500 2.500 4.500a2.500 2.500 0 0 1-5 0C7.500 13.500 8 12.500 10 10Z" fill="#2691ea" />
        </svg>
        <span className="ml-[10px] w-[45px] font-['Inter',sans-serif] text-[13px]">30°C</span>
        <svg className="h-[7px] w-3" viewBox="0 0 12 7" aria-hidden="true"><path d="M.5 6.500 6 1 11.500 6.500" fill="none" stroke="#e6e6e6" strokeWidth="1.200" /></svg>
        <svg className="ml-3 h-[14px] w-3" viewBox="0 0 12 14" aria-hidden="true">
          <path d="M1 4.500H8V9.500H1ZM8 6.500 11 5V9L8 7.500M2 2C4 .5 6 .5 8 2M2 12C4 13.500 6 13.500 8 12" fill="none" stroke="#d2d2d2" strokeWidth="1.100" />
        </svg>
        <svg className="ml-2 h-[9px] w-4" viewBox="0 0 16 9" aria-hidden="true">
          <path d="M.5.5H13.500V8.500H.5ZM13.500 3H15.500V6H13.500" fill="none" stroke="#eee" />
          <rect x="2" y="2" width="8.500" height="5" fill="#fff" />
        </svg>
        <svg className="ml-2 h-[13px] w-[14px]" viewBox="0 0 14 13" aria-hidden="true">
          <g fill="none" stroke="#bdbdbd" strokeWidth="1.200">
            <path d="M.7 12.500A12 12 0 0 1 13 .7" />
            <path d="M4 12.500A9 9 0 0 1 13 4" />
            <path d="M7.300 12.500A6 6 0 0 1 13 7.300" />
          </g>
          <circle cx="12" cy="11.500" r="1.400" fill="#eee" />
        </svg>
        <svg className="ml-[7px] h-3 w-[15px]" viewBox="0 0 15 12" aria-hidden="true">
          <path d="M.5 4H3L6.500 1V11L3 8H.5ZM8.500 4C9.500 5 9.500 7 8.500 8M10.500 2.500C12.500 4.500 12.500 7.500 10.500 9.500M12.500 1C15 3.500 15 8.500 12.500 11" fill="none" stroke="#cfcfcf" />
        </svg>
        <span className="ml-[8px] pb-[2px] text-xs">ENG</span>
        <time className="ml-3 w-[54px] pb-[2px] text-center text-[11px] leading-4 whitespace-nowrap" dateTime="2021-09-21T14:56">
          下午 02:56
          <br />
          2021/9/21
        </time>
        <button type="button" aria-label="Notifications" className="relative ml-4 h-6 w-6">
          <svg className="h-6 w-6" viewBox="0 0 24 24" aria-hidden="true">
            <path d="M1 2H17V15H8L5 18V15H1Z" fill="#f7f7f7" />
            <path d="M4 5.500H14M4 8.500H14M4 11.500H10" stroke="#555" />
            <circle cx="16" cy="17" r="6.800" fill="#3d3f41" stroke="#8b8b8b" />
          </svg>
          <span className="absolute right-0 bottom-0 h-[14px] w-4 text-center text-[11px] leading-[14px] font-bold">2</span>
        </button>
      </div>
    </footer>
  );
}

export default function App() {
  return (
    <div className={`flex h-screen flex-col overflow-hidden bg-[#02020a] ${SANS}`}>
      <SharedDefs />
      <div className="relative flex min-h-0 flex-1">
        <Wallpaper />
        <DesktopShortcuts />
        <main className="relative mt-[2px] mr-[132px] flex min-w-0 flex-1 flex-col bg-white">
          <TitleBar />
          <MenuAndTools />
          <div className="flex min-h-0 flex-1">
            <Sidebar />
            <MessageList />
            <DetailPane />
          </div>
          <InstallDialog />
        </main>
      </div>
      <Taskbar />
    </div>
  );
}
